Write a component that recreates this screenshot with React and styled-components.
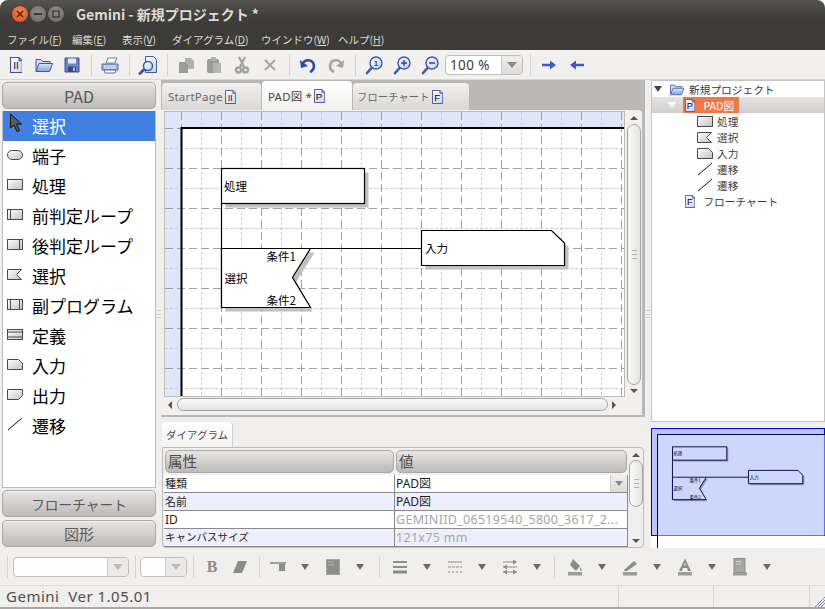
import React from 'react'
import styled, { createGlobalStyle } from 'styled-components'

const sans = `"Noto Sans", "Noto Sans CJK JP", sans-serif`
const cjk = `"Noto Sans CJK JP", sans-serif`

const GlobalStyle = createGlobalStyle`
  html, body { margin: 0; padding: 0; background: #fff; }
  body { font-family: ${sans}; }
`

const Window = styled.div`
  width: 825px;
  height: 609px;
  display: flex;
  flex-direction: column;
  overflow: hidden;
  background: #f0efed;
  border-radius: 8px 8px 0 0;
`
const TitleBar = styled.div`
  height: 28px;
  flex: none;
  display: flex;
  align-items: center;
  padding-left: 12px;
  background: linear-gradient(#55544f, #3f3e3a 60%, #3c3b37);
`
const WinButton = styled.span`
  width: 16px;
  height: 16px;
  margin-right: 2px;
  border-radius: 50%;
  display: flex;
  align-items: center;
  justify-content: center;
  background: ${p => p.$close ? 'radial-gradient(circle at 50% 35%, #f5874f, #dd4814)' : 'radial-gradient(circle at 50% 35%, #8f8e86, #67665f)'};
  box-shadow: 0 0 1px #222;
`
const Title = styled.div`
  margin-left: 10px;
  font: 700 14px/20px ${cjk};
  color: #dfdbd2;
  margin-top: -1px;
`
const MenuBar = styled.div`
  height: 22px;
  flex: none;
  display: flex;
  align-items: center;
  padding-left: 7px;
  background: #3c3b37;
  font: 10.5px ${cjk};
  color: #dfdbd2;
  u { text-underline-offset: 1px; }
`
const MenuItem = styled.span`
  width: ${p => p.$w}px;
  flex: none;
  white-space: nowrap;
`
const Toolbar = styled.div`
  height: 30px;
  flex: none;
  display: flex;
  align-items: center;
  padding-left: 2px;
  background: #f1f0ee;
  border-bottom: 1px solid #d8d7d5;
  box-sizing: border-box;
`
const ToolButton = styled.span`
  width: 28px;
  height: 28px;
  flex: none;
  display: flex;
  align-items: center;
  justify-content: center;
`
const ToolSep = styled.span`
  width: 10px;
  height: 22px;
  flex: none;
  margin-left: ${p => p.$ml || 0}px;
  margin-right: ${p => p.$mr || 0}px;
  background: linear-gradient(#d5d4d2, #d5d4d2) center / 1px 100% no-repeat;
`
const Combo = styled.span`
  width: ${p => p.$w}px;
  height: 20px;
  flex: none;
  box-sizing: border-box;
  display: flex;
  border: 1px solid #c0bfbd;
  border-radius: 4px;
  overflow: hidden;
  background: #fff;
  font: 13.5px ${sans};
  letter-spacing: 0.4px;
  color: #3c3c3c;
  margin-left: ${p => p.$ml || 0}px;
`
const ComboText = styled.span`
  flex: 1;
  padding-left: 4px;
  line-height: 18px;
`
const ComboArrow = styled.span`
  width: 20px;
  flex: none;
  display: flex;
  align-items: center;
  justify-content: center;
  background: ${p => p.$muted ? '#ebeae8' : 'linear-gradient(#f0efed, #dcdbd9)'};
  border-left: 1px solid #d0cfcd;
  &::after {
    content: '';
    border-left: 5px solid transparent;
    border-right: 5px solid transparent;
    border-top: 6px solid ${p => p.$muted ? '#bdbcba' : '#8a8a88'};
  }
`
const Main = styled.div`
  height: 468px;
  flex: none;
  display: flex;
`
const Palette = styled.div`
  width: 154px;
  flex: none;
  margin-left: 2px;
  display: flex;
  flex-direction: column;
  padding-top: 2px;
`
const DrawerButton = styled.div`
  height: 27px;
  flex: none;
  box-sizing: border-box;
  display: flex;
  align-items: center;
  justify-content: center;
  border: 1px solid #a9a8a6;
  border-radius: 5px;
  background: linear-gradient(#e6e5e3, #c6c5c3 75%, #bcbbb9);
  font: ${p => p.$fs || 15}px ${cjk};
  color: #5c5856;
  margin-top: ${p => p.$mt || 0}px;
  box-shadow: inset 0 1px 0 #f4f3f1;
`
const PaletteList = styled.div`
  flex: none;
  height: 377px;
  margin-top: 2px;
  margin-bottom: 2px;
  background: #fff;
  border-right: 1px solid #bdbcba;
  border-bottom: 1px solid #bdbcba;
  border-left: 1px solid #bdbcba;
  box-sizing: border-box;
`
const PaletteRow = styled.div`
  height: 30px;
  display: flex;
  align-items: center;
  padding-left: 4px;
  background: ${p => p.$active ? '#4180e0' : 'transparent'};
  color: ${p => p.$active ? '#fff' : '#000'};
  font: 17px/28px ${cjk};
  svg { flex: none; margin-right: 8px; margin-top: -4px; }
`
const Splitter = styled.div`
  width: ${p => p.$w || 5}px;
  flex: none;
  display: flex;
  align-items: center;
  justify-content: center;
  &::after {
    content: '';
    width: 4px;
    height: 6px;
    border-top: 1px solid #cfcecc;
    border-bottom: 1px solid #cfcecc;
    background: linear-gradient(#cfcecc, #cfcecc) center / 100% 1px no-repeat;
  }
`
const Center = styled.div`
  width: 484px;
  flex: none;
  display: flex;
  flex-direction: column;
`
const EditorPane = styled.div`
  height: 337px;
  flex: none;
  display: flex;
  flex-direction: column;
  background: #b9b8b6;
  padding-top: 1px;
  padding-right: 3px;
  padding-bottom: 2px;
  box-sizing: border-box;
`
const TabStrip = styled.div`
  height: 29px;
  flex: none;
  display: flex;
  align-items: flex-end;
  padding-left: 1px;
`
const Tab = styled.div`
  width: ${p => p.$w}px;
  height: ${p => p.$active ? 29 : 27}px;
  flex: none;
  box-sizing: border-box;
  display: flex;
  align-items: center;
  gap: 2px;
  padding-left: ${p => p.$pad || 6}px;
  margin-right: 1px;
  border-radius: 4px 4px 0 0;
  background: ${p => p.$active ? 'linear-gradient(#fff, #f1f0ee)' : 'linear-gradient(#f1f0ee, #d9d8d6)'};
  font: ${p => p.$fs || 11.5}px ${sans};
  letter-spacing: 0.2px;
  color: ${p => p.$active ? '#444' : '#6a6a6a'};
`
const TabBody = styled.div`
  flex: 1;
  min-height: 0;
  display: grid;
  grid-template-columns: 459px 18px;
  grid-template-rows: 286px 19px;
  padding-left: 4px;
  background: #f1f0ee;
  border-radius: 0 4px 0 0;
`
const CanvasBox = styled.div`
  width: 459px;
  height: 284px;
  margin-top: 2px;
  overflow: hidden;
  background: #fff;
  outline: 1px solid #bdbcba;
  svg { display: block; }
`
const VScroll = styled.div`
  display: flex;
  flex-direction: column;
  align-items: center;
  padding: ${p => p.$pad || '3px 0'};
  margin-left: ${p => p.$ml || 3}px;
  width: 14px;
`
const Thumb = styled.div`
  flex: ${p => p.$fixed ? 'none' : 1};
  border: 1px solid #a5a4a2;
  box-sizing: border-box;
  background: ${p => p.$h ? 'linear-gradient(#fafafa, #e4e3e1)' : 'linear-gradient(90deg, #fafafa, #e4e3e1)'};
  border-radius: 8px;
  display: flex;
  align-items: center;
  justify-content: center;
  width: ${p => p.$h ? 'auto' : '100%'};
  height: ${p => p.$h ? '100%' : p.$fixed ? `${p.$fixed}px` : 'auto'};
  &::after {
    content: '';
    display: ${p => p.$h ? 'none' : 'block'};
    width: 5px;
    height: 7px;
    border-top: 1px solid #b5b4b2;
    border-bottom: 1px solid #b5b4b2;
    background: linear-gradient(#b5b4b2, #b5b4b2) center / 100% 1px no-repeat;
  }
`
const Spacer = styled.span`
  flex: 1;
`
const Arrow = styled.span`
  flex: none;
  width: 0;
  height: 0;
  margin: ${p => p.$m || 0};
  ${p => p.$dir === 'up' && 'border-left: 4px solid transparent; border-right: 4px solid transparent; border-bottom: 4px solid #555;'}
  ${p => p.$dir === 'down' && 'border-left: 4px solid transparent; border-right: 4px solid transparent; border-top: 4px solid #555;'}
  ${p => p.$dir === 'left' && 'border-top: 4px solid transparent; border-bottom: 4px solid transparent; border-right: 4px solid #555;'}
  ${p => p.$dir === 'right' && 'border-top: 4px solid transparent; border-bottom: 4px solid transparent; border-left: 4px solid #555;'}
`
const HScroll = styled.div`
  height: 13px;
  margin-top: 2px;
  display: flex;
  align-items: center;
  padding: 0 8px 0 3px;
`
const PropPane = styled.div`
  flex: 1;
  min-height: 0;
  display: flex;
  flex-direction: column;
  padding-top: 5px;
  padding-left: 1px;
  padding-right: 1px;
`
const PropTab = styled.div`
  width: 71px;
  height: 25px;
  flex: none;
  box-sizing: border-box;
  display: flex;
  align-items: center;
  justify-content: center;
  background: linear-gradient(#fff, #f3f2f0);
  border-radius: 4px 4px 0 0;
  font: 10.5px ${cjk};
  color: #4a4a4a;
  border-right: 1px solid #d0cfcd;
`
const PropBody = styled.div`
  flex: 1;
  min-height: 0;
  display: grid;
  grid-template-columns: 1fr 17px;
  border: 1px solid #bdbcba;
  border-radius: 0 4px 4px 4px;
  padding-left: 1px;
`
const PropTable = styled.div`
  display: grid;
  grid-template-columns: 231px 233px;
  grid-template-rows: 27px repeat(4, 18px);
  font: 12px ${cjk};
`
const HeadCell = styled.div`
  height: 23px;
  margin: 2px 1px 0 1px;
  box-sizing: border-box;
  border: 1px solid #a9a8a6;
  border-radius: 5px;
  background: linear-gradient(#e8e7e5, #c5c4c2 75%, #bcbbb9);
  font: 14.5px/20px ${cjk};
  color: #4e4a48;
  padding-left: 2px;
`
const Cell = styled.div`
  height: 18px;
  box-sizing: border-box;
  border-bottom: 1px solid #8a8a8a;
  border-right: 1px solid #8a8a8a;
  background: ${p => p.$alt ? '#eeeefe' : '#fff'};
  color: ${p => p.$off ? '#a5a5a5' : '#222'};
  padding-left: 1px;
  line-height: 17px;
  white-space: nowrap;
  overflow: hidden;
  font-family: ${sans};
  font-size: ${p => p.$fs || (p.$off ? 12.5 : 12)}px;
  letter-spacing: ${p => p.$off ? 0.3 : 0}px;
  display: flex;
  span:first-child { flex: 1; }
`
const CellArrow = styled(ComboArrow)`
  width: 16px;
  &::after { border-left-width: 4px; border-right-width: 4px; border-top-width: 5px; }
`
const RightPane = styled.div`
  flex: 1;
  min-width: 0;
  display: flex;
  flex-direction: column;
`
const Tree = styled.div`
  height: 342px;
  flex: none;
  box-sizing: border-box;
  background: #fff;
  border: 1px solid #c5c4c2;
  font: 10.7px ${cjk};
  color: #3a3a3a;
`
const TreeRow = styled.div`
  height: 16px;
  display: flex;
  align-items: center;
  padding-left: ${p => p.$indent}px;
  gap: 4px;
  background: ${p => p.$sel ? 'linear-gradient(#e4e3e1, #cfcecc)' : 'transparent'};
  white-space: nowrap;
`
const TreeTwist = styled.span`
  width: 0;
  height: 0;
  margin-right: 3px;
  border-left: 4px solid transparent;
  border-right: 4px solid transparent;
  border-top: 6px solid ${p => p.$light ? '#fff' : '#444'};
`
const TreeSelected = styled.span`
  display: flex;
  align-items: center;
  gap: 8px;
  height: 16px;
  width: 56px;
  padding-left: 2px;
  box-sizing: border-box;
  background: #f07746;
  color: #fff;
`
const TreeLabel = styled.span`
  margin-left: ${p => p.$ml || 0}px;
`
const MiniMap = styled.div`
  height: 120px;
  flex: none;
  margin-top: 6px;
  background: #fff;
  svg { display: block; }
`
const BottomBar = styled.div`
  height: 38px;
  flex: none;
  display: flex;
  align-items: center;
  padding-left: 2px;
  box-sizing: border-box;
  border-bottom: 1px solid #dcdbd9;
`
const BoldButton = styled(ToolButton)`
  font: 900 16px "Liberation Serif", serif;
  color: #8c8c8c;
`
const DropMark = styled.span`
  width: 27px;
  height: 28px;
  flex: none;
  display: flex;
  align-items: center;
  justify-content: center;
  padding-right: 2px;
  box-sizing: border-box;
  &::after {
    content: '';
    border-left: 4px solid transparent;
    border-right: 4px solid transparent;
    border-top: 6px solid #6a6a6a;
  }
`
const StatusBar = styled.div`
  height: 23px;
  flex: none;
  display: flex;
  align-items: center;
  box-sizing: border-box;
  border-bottom: 2px solid #a8a7a5;
  font: 15px ${sans};
  letter-spacing: 0.5px;
  color: #4e4e4e;
  white-space: pre;
`
const StatusCell = styled.div`
  width: ${p => p.$w}px;
  flex: none;
  height: 100%;
  padding-left: ${p => p.$first ? 6 : 0}px;
  box-sizing: border-box;
  border-right: 1px solid #d8d7d5;
  line-height: 20px;
`
const Grip = styled.svg`
  margin-left: auto;
  align-self: flex-end;
`
const CursorIcon = styled.svg`
  && { margin: -6px 6px 0 2px; }
`

/* ---------- icons ---------- */
const Defs = () => (
  <svg width="0" height="0" style={{ position: 'absolute' }}>
    <defs>
      <linearGradient id="docFill" x1="0" y1="0" x2="1" y2="1">
        <stop offset="0" stopColor="#ffffff" />
        <stop offset="1" stopColor="#c8d2f4" />
      </linearGradient>
      <linearGradient id="shapeFill" x1="0" y1="0" x2="1" y2="1">
        <stop offset="0" stopColor="#ffffff" />
        <stop offset="1" stopColor="#c2c2c2" />
      </linearGradient>
      <linearGradient id="folderFill" x1="0" y1="0" x2="0" y2="1">
        <stop offset="0" stopColor="#dfe8fb" />
        <stop offset="1" stopColor="#7aa3e6" />
      </linearGradient>
      <linearGradient id="lensFill" x1="0" y1="0" x2="1" y2="1">
        <stop offset="0" stopColor="#ffffff" />
        <stop offset="1" stopColor="#bcd0f0" />
      </linearGradient>
    </defs>
  </svg>
)

const DocIcon = ({ letter, size = 15 }) => (
  <svg width={size * 0.8} height={size} viewBox="0 0 12 15">
    <path d="M.5.5h8l3 3v11H.5z" fill="url(#docFill)" stroke="#3f4f9e" />
    <path d="M8.5.5v3h3" fill="none" stroke="#3f4f9e" />
    <text
      x="5.6"
      y={letter === 'Ⅱ' ? 11.5 : 12}
      textAnchor="middle"
      fontSize={letter === 'Ⅱ' ? 8.5 : 10.5}
      fontFamily={letter === 'Ⅱ' ? 'Noto Sans CJK JP' : 'Liberation Sans'}
      fill="#000"
    >
      {letter}
    </text>
  </svg>
)

const Shape = ({ children, w = 17, h = 13 }) => (
  <svg width={w} height={h} viewBox="0 0 17 13">{children}</svg>
)
const sp = { fill: 'url(#shapeFill)', stroke: '#4a4a4a', strokeWidth: 1 }

const paletteIcons = {
  cursor: (
    <CursorIcon width="17" height="20" viewBox="0 0 17 20">
      <path d="M1.500 1v14l3.500-3 3 6.500 2.500-1-3-6.500h5z" fill="#5b5b5b" stroke="#111" />
    </CursorIcon>
  ),
  terminal: <Shape><rect x=".5" y="2.5" width="15" height="9" rx="4.5" {...sp} /></Shape>,
  process: <Shape><rect x=".5" y="1.5" width="15" height="10" {...sp} /></Shape>,
  pre: <Shape><rect x=".5" y="1.5" width="15" height="10" {...sp} /><path d="M3.5 1.5v10" stroke="#4a4a4a" /></Shape>,
  post: <Shape><rect x=".5" y="1.5" width="15" height="10" {...sp} /><path d="M12.5 1.5v10" stroke="#4a4a4a" /></Shape>,
  choice: <Shape><path d="M.5 1.5h14l-5 5 5 5H.5z" {...sp} /></Shape>,
  sub: <Shape><rect x=".5" y="1.5" width="15" height="10" {...sp} /><path d="M3.5 1.5v10M12.5 1.5v10" stroke="#4a4a4a" /></Shape>,
  define: <Shape><rect x=".5" y="1.5" width="15" height="10" {...sp} /><path d="M.5 4h15M.5 9h15" stroke="#4a4a4a" /></Shape>,
  input: <Shape><path d="M.5 1.5h11l4 4v6H.5z" {...sp} /></Shape>,
  output: <Shape><path d="M.5 1.5h15v6l-4 4H.5z" {...sp} /></Shape>,
  line: <Shape><path d="M1 12 15 0" stroke="#111" fill="none" /></Shape>,
}

const Ico = ({ children, w = 20, h = 20 }) => (
  <svg width={w} height={h} viewBox="0 0 20 20">{children}</svg>
)
const dis = '#a3a3a1'
const OpenFolder = ({ w = 18, h = 16 }) => (
  <svg width={w} height={h} viewBox="0 0 18 16">
    <path d="M1 14V2.500h5l1.500 2H15v2" fill="#cfdcf6" stroke="#3a5aa8" />
    <path d="M1 14.500 4 6.500h13.500l-3 8z" fill="url(#folderFill)" stroke="#3a5aa8" />
  </svg>
)
const Magnifier = ({ mark }) => (
  <Ico>
    <path d="M3 18 8 12.500" stroke="#3a5aa8" strokeWidth="2.600" strokeLinecap="round" />
    <circle cx="12" cy="8" r="6" fill="url(#lensFill)" stroke="#3a5aa8" strokeWidth="1.400" />
    {mark === '1' && <text x="12" y="11" textAnchor="middle" fontSize="8" fontWeight="700" fontFamily="Liberation Sans" fill="#2a4a98">1</text>}
    {mark === '+' && <path d="M9 8h6M12 5v6" stroke="#2a4a98" strokeWidth="1.500" />}
    {mark === '-' && <path d="M9 8h6" stroke="#2a4a98" strokeWidth="1.500" />}
  </Ico>
)
const toolIcons = {
  doc: <DocIcon letter="Ⅱ" size={16} />,
  open: <OpenFolder />,
  save: (
    <Ico>
      <path d="M3 3h14v14H3z" fill="#6e83c2" stroke="#3f4f8e" />
      <rect x="6" y="3.500" width="8" height="5" fill="#e6ebf7" />
      <rect x="6" y="11.500" width="8" height="5.500" fill="#39477f" />
      <rect x="11" y="12.500" width="2" height="3.500" fill="#b5c0e5" />
    </Ico>
  ),
  print: (
    <Ico>
      <path d="M6 8 8 3h9l-2 5z" fill="#fff" stroke="#6a7fb8" />
      <path d="M2 9h16v6H2z" fill="#9fb0d8" stroke="#5a6fa8" />
      <path d="M4 15h12l-1 3H5z" fill="#fff" stroke="#5a6fa8" />
      <path d="M4 11h12M4 13h12" stroke="#e8ecf7" />
    </Ico>
  ),
  find: (
    <Ico>
      <path d="M7.500 1.500h8l3 3v13h-11z" fill="url(#docFill)" stroke="#3a5aa8" />
      <path d="M2 18.500 6 14.500" stroke="#3a5aa8" strokeWidth="3" strokeLinecap="round" />
      <circle cx="10" cy="11" r="4.500" fill="url(#lensFill)" stroke="#3a5aa8" strokeWidth="1.500" />
    </Ico>
  ),
  copy: (
    <Ico>
      <path d="M9 3h6l3 3v8H9z" fill="#b0b0ae" />
      <path d="M3 7h6l3 3v8H3z" fill="#9c9c9a" />
    </Ico>
  ),
  paste: (
    <Ico>
      <rect x="3" y="4" width="12" height="14" rx="2" fill="#9c9c9a" />
      <rect x="7" y="2" width="5" height="4" rx="1" fill="#b0b0ae" />
      <path d="M9 8h8v10H9z" fill="#b4b4b2" />
    </Ico>
  ),
  cut: (
    <Ico>
      <path d="M7 2l5 10M13 2 8 12" stroke={dis} strokeWidth="2.200" />
      <circle cx="6.500" cy="15" r="2.500" fill="none" stroke={dis} strokeWidth="2.400" />
      <circle cx="13.500" cy="15" r="2.500" fill="none" stroke={dis} strokeWidth="2.400" />
    </Ico>
  ),
  del: <Ico><path d="M5 5l10 10M15 5 5 15" stroke={dis} strokeWidth="2" /></Ico>,
  undo: (
    <Ico>
      <path d="M4 10c2-6 11-7 12 1 0 3-2 5-4 6" fill="none" stroke="#2a48b8" strokeWidth="2.600" />
      <path d="M2 5 3 13l7-2z" fill="#2a48b8" />
    </Ico>
  ),
  redo: (
    <Ico>
      <path d="M16 10c-2-6-11-7-12 1 0 3 2 5 4 6" fill="none" stroke={dis} strokeWidth="2.600" />
      <path d="M18 5l-1 8-7-2z" fill={dis} />
    </Ico>
  ),
  right: <Ico><path d="M3 8.700h8V5.500l6 4.500-6 4.500v-3.200H3z" fill="#3a5ac8" /></Ico>,
  left: <Ico><path d="M17 8.700H9V5.500L3 10l6 4.500v-3.200h8z" fill="#3a5ac8" /></Ico>,
}

const g = '#8c8c8a'
const bottomIcons = {
  slant: <Ico><path d="M8 4h9l-5 12H3z" fill={g} /></Ico>,
  align: <Ico><path d="M2 5h16v2H2z" fill="#a0a09e" /><rect x="11" y="7" width="6" height="7" fill={g} /></Ico>,
  page: <Ico><rect x="3.500" y="2.500" width="13" height="15" fill={g} stroke="#a5a5a3" /><path d="M5 5h6M5 8h6" stroke="#b9b9b7" /></Ico>,
  lines: <Ico><path d="M3 5h14" stroke={g} strokeWidth="2" /><path d="M3 10h14" stroke={g} strokeWidth="2" /><path d="M3 15h14" stroke={g} strokeWidth="3" /></Ico>,
  dash: <Ico><path d="M3 5h14" stroke={g} /><path d="M3 10h14" stroke={g} strokeDasharray="3 1" /><path d="M3 15h14" stroke={g} strokeDasharray="2 2" /></Ico>,
  arrows: <Ico><path d="M3 5h13M3 10h14M3 15h14" stroke={g} /><path d="M13 2.500 17 5l-4 2.500zM7 7.500 3 10l4 2.500zM7 12.500 3 15l4 2.500zM13 12.500 17 15l-4 2.500z" fill={g} /></Ico>,
  fill: <Ico><path d="M8 2l7 7-4 5-6-6z" fill={g} /><path d="M15 10c2 2 2 4 1 4s-1-2-1-4z" fill={g} /><rect x="3" y="15" width="14" height="3.500" fill="#9c9c9a" /></Ico>,
  pen: <Ico><path d="M4 13 14 4l3 3-10 7H4z" fill={g} /><rect x="3" y="15" width="14" height="3.500" fill="#9c9c9a" /></Ico>,
  font: <Ico><path d="M10 1.500 16 14h-3l-1-3H8l-1 3H4zM9 8.500h2L10 6z" fill={g} fillRule="evenodd" /><rect x="3" y="15" width="14" height="3.500" fill="#9c9c9a" /></Ico>,
  shade: <Ico><rect x="4" y="1.500" width="11" height="14" fill="#a5a5a3" stroke={g} /><path d="M6 4.500h5M6 7h5" stroke="#d0d0ce" /><rect x="3" y="15.500" width="14" height="3" fill="#9c9c9a" /></Ico>,
}

/* ---------- PAD diagram, drawn on page coordinates so the minimap can reuse it ---------- */
const Diagram = ({ line = '#000', shadow = '#c0c0c0', width = 1.2, fontSize = 11.5, fill = '#fff' }) => {
  const label = { fontSize, fontFamily: 'Noto Sans CJK JP', fill: line }
  return (
    <g fill="none">
      <rect x="225.500" y="172.500" width="143" height="35" fill={shadow} />
      <path d="M314.500 252.500 296.500 281.500 310.500 307.500 312.500 311.500H225.500V252.500z" fill={shadow} />
      <path d="M425.500 234.500H555.500L568.500 247V269.500H425.500z" fill={shadow} />
      <rect x="221.500" y="168.500" width="143" height="35" fill={fill} stroke={line} strokeWidth={width} />
      <path d="M221.500 203.500v104" stroke={line} strokeWidth={width} />
      <path d="M221.500 248.500H310.500L292.500 277.500 310.500 307.500H221.500z" fill={fill} stroke={line} strokeWidth={width} />
      <path d="M310.500 248.500h111" stroke={line} strokeWidth={width} />
      <path d="M421.500 230.500H551.500L564.500 243V265.500H421.500z" fill={fill} stroke={line} strokeWidth={width} />
      <text x="224" y="191" {...label}>処理</text>
      <text x="224.500" y="283" {...label}>選択</text>
      <text x="266.500" y="261" {...label}>条件1</text>
      <text x="266.500" y="305" {...label}>条件2</text>
      <text x="425" y="253" {...label}>入力</text>
    </g>
  )
}

const CanvasGrid = () => {
  const vs = Array.from({ length: 23 }, (_, k) => 181.5 + 20 * k)
  const hs = Array.from({ length: 14 }, (_, k) => 128.5 + 20 * k)
  return (
    <g>
      <path d="M165 112h459v16H181v268h-16z" fill="#e0e6fa" />
      {hs.map((y, k) => (
        <line key={y} x1="165" x2="624" y1={y} y2={y} stroke={k % 2 ? '#cccccc' : '#a0a0a0'} strokeDasharray={k % 2 ? '3 2' : '8 4'} />
      ))}
      {vs.map((x, k) => (
        <line key={x} x1={x} x2={x} y1="112" y2="396" stroke={k % 2 ? '#cccccc' : '#a0a0a0'} strokeDasharray={k % 2 ? '3 2' : '8 4'} />
      ))}
      <path d="M624 128H181.500V396" fill="none" stroke="#000" strokeWidth="2" />
    </g>
  )
}

const palette = [
  ['cursor', '選択'], ['terminal', '端子'], ['process', '処理'], ['pre', '前判定ループ'],
  ['post', '後判定ループ'], ['choice', '選択'], ['sub', '副プログラム'], ['define', '定義'],
  ['input', '入力'], ['output', '出力'], ['line', '遷移'],
]
const menus = [
  ['ファイル', 'F', 65], ['編集', 'E', 50], ['表示', 'V', 50], ['ダイアグラム', 'D', 89], ['ウインドウ', 'W', 77], ['ヘルプ', 'H', 60],
]
const treeChildren = [['process', '処理'], ['choice', '選択'], ['input', '入力'], ['line', '遷移'], ['line', '遷移']]

const Tools = ({ names }) => names.map((n, i) => <ToolButton key={i}>{toolIcons[n]}</ToolButton>)

const BottomTool = ({ name }) => (
  <>
    <ToolButton>{bottomIcons[name]}</ToolButton>
    <DropMark />
  </>
)

export default function App() {
  return (
    <Window>
      <GlobalStyle />
      <Defs />
      <TitleBar>
        <WinButton $close>
          <svg width="8" height="8" viewBox="0 0 8 8"><path d="M1 1l6 6M7 1 1 7" stroke="#5a1f08" strokeWidth="1.500" /></svg>
        </WinButton>
        <WinButton>
          <svg width="8" height="8" viewBox="0 0 8 8"><path d="M0 4h8" stroke="#3c3b37" strokeWidth="2" /></svg>
        </WinButton>
        <WinButton>
          <svg width="8" height="8" viewBox="0 0 8 8"><rect x="1" y="1" width="6" height="6" fill="none" stroke="#3c3b37" strokeWidth="1.400" /></svg>
        </WinButton>
        <Title>Gemini - 新規プロジェクト *</Title>
      </TitleBar>
      <MenuBar>
        {menus.map(([label, key, w]) => (
          <MenuItem key={key} $w={w}>{label}(<u>{key}</u>)</MenuItem>
        ))}
      </MenuBar>
      <Toolbar>
        <Tools names={['doc', 'open', 'save']} />
        <ToolSep />
        <Tools names={['print']} />
        <ToolSep />
        <Tools names={['find']} />
        <ToolSep />
        <Tools names={['copy', 'paste', 'cut', 'del']} />
        <ToolSep />
        <Tools names={['undo', 'redo']} />
        <ToolSep />
        <ToolButton><Magnifier mark="1" /></ToolButton>
        <ToolButton><Magnifier mark="+" /></ToolButton>
        <ToolButton><Magnifier mark="-" /></ToolButton>
        <Combo $w={78} $ml={1}><ComboText>100 %</ComboText><ComboArrow /></Combo>
        <ToolSep $ml={2} />
        <Tools names={['right', 'left']} />
      </Toolbar>
      <Main>
        <Palette>
          <DrawerButton $fs={16}>PAD</DrawerButton>
          <PaletteList>
            {palette.map(([icon, label], i) => (
              <PaletteRow key={i} $active={i === 0}>
                {paletteIcons[icon]}
                {label}
              </PaletteRow>
            ))}
          </PaletteList>
          <DrawerButton $fs={13.7}>フローチャート</DrawerButton>
          <DrawerButton $mt={3}>図形</DrawerButton>
        </Palette>
        <Splitter />
        <Center>
          <EditorPane>
            <TabStrip>
              <Tab $w={99}>StartPage<DocIcon letter="Ⅱ" size={14} /></Tab>
              <Tab $w={90} $active>PAD図 *<DocIcon letter="P" size={14} /></Tab>
              <Tab $w={116} $pad={4} $fs={10.2}>フローチャート<DocIcon letter="F" size={14} /></Tab>
            </TabStrip>
            <TabBody>
              <CanvasBox>
                <svg width="459" height="284" viewBox="165 112 459 284">
                  <CanvasGrid />
                  <Diagram />
                </svg>
              </CanvasBox>
              <VScroll>
                <Arrow $dir="up" $m="3px 0 4px" />
                <Thumb />
                <Arrow $dir="down" $m="4px 0 0" />
              </VScroll>
              <HScroll>
                <Arrow $dir="left" $m="0 5px 0 0" />
                <Thumb $h />
                <Arrow $dir="right" $m="0 0 0 4px" />
              </HScroll>
            </TabBody>
          </EditorPane>
          <PropPane>
            <PropTab>ダイアグラム</PropTab>
            <PropBody>
              <PropTable>
                <HeadCell>属性</HeadCell>
                <HeadCell>値</HeadCell>
                <Cell $fs={11}>種類</Cell>
                <Cell><span>PAD図</span><CellArrow /></Cell>
                <Cell $alt $fs={11}>名前</Cell>
                <Cell $alt>PAD図</Cell>
                <Cell>ID</Cell>
                <Cell $off>GEMINIID_06519540_5800_3617_2...</Cell>
                <Cell $alt $fs={10.5}>キャンバスサイズ</Cell>
                <Cell $alt $off>121x75 mm</Cell>
              </PropTable>
              <VScroll $ml={1} $pad="3px 0 4px">
                <Arrow $dir="up" $m="2px 0 3px" />
                <Thumb $fixed={47} />
                <Spacer />
                <Arrow $dir="down" />
              </VScroll>
            </PropBody>
          </PropPane>
        </Center>
        <Splitter $w={6} />
        <RightPane>
          <Tree>
            <TreeRow $indent={2}>
              <TreeTwist />
              <OpenFolder w={16} h={13} />
              新規プロジェクト
            </TreeRow>
            <TreeRow $indent={16} $sel>
              <TreeTwist $light />
              <TreeSelected><DocIcon letter="P" size={13} />PAD図</TreeSelected>
            </TreeRow>
            {treeChildren.map(([icon, label], i) => (
              <TreeRow key={i} $indent={45}>
                {paletteIcons[icon]}
                <TreeLabel $ml={-1}>{label}</TreeLabel>
              </TreeRow>
            ))}
            <TreeRow $indent={33}>
              <DocIcon letter="F" size={13} />
              <TreeLabel $ml={4}>フローチャート</TreeLabel>
            </TreeRow>
          </Tree>
          <MiniMap>
            <svg width="175" height="120" viewBox="0 0 175 120">
              <rect x=".500" y=".500" width="173" height="107" fill="#b9c5f3" stroke="#0000e0" />
              <rect x="6.500" y="6.500" width="167" height="101" fill="#cdd7fa" />
              <path d="M175 6.500H6.500V120" fill="none" stroke="#000050" />
              <g transform="translate(-62.700 -45.200) scale(.38)">
                <Diagram line="#000040" shadow="#8d98c8" width={2.400} fontSize={11.500} fill="#cdd7fa" />
              </g>
            </svg>
          </MiniMap>
        </RightPane>
      </Main>
      <BottomBar>
        <ToolSep $mr={1} />
        <Combo $w={116}><ComboText /><ComboArrow $muted /></Combo>
        <ToolSep $ml={1} />
        <Combo $w={47}><ComboText /><ComboArrow $muted /></Combo>
        <ToolSep $ml={1} />
        <BoldButton>B</BoldButton>
        <ToolButton>{bottomIcons.slant}</ToolButton>
        <ToolSep />
        <BottomTool name="align" />
        <BottomTool name="page" />
        <ToolSep $mr={2} />
        <BottomTool name="lines" />
        <BottomTool name="dash" />
        <BottomTool name="arrows" />
        <ToolSep $ml={-2} $mr={2} />
        <BottomTool name="fill" />
        <BottomTool name="pen" />
        <BottomTool name="font" />
        <BottomTool name="shade" />
      </BottomBar>
      <StatusBar>
        <StatusCell $w={619} $first>Gemini  Ver 1.05.01</StatusCell>
        <StatusCell $w={95} />
        <StatusCell $w={96} />
        <Grip width="12" height="12" viewBox="0 0 12 12">
          <path d="M2 12 12 2M5 12l7-7M8 12l4-4" stroke="#7f7fa8" />
        </Grip>
      </StatusBar>
    </Window>
  )
}
